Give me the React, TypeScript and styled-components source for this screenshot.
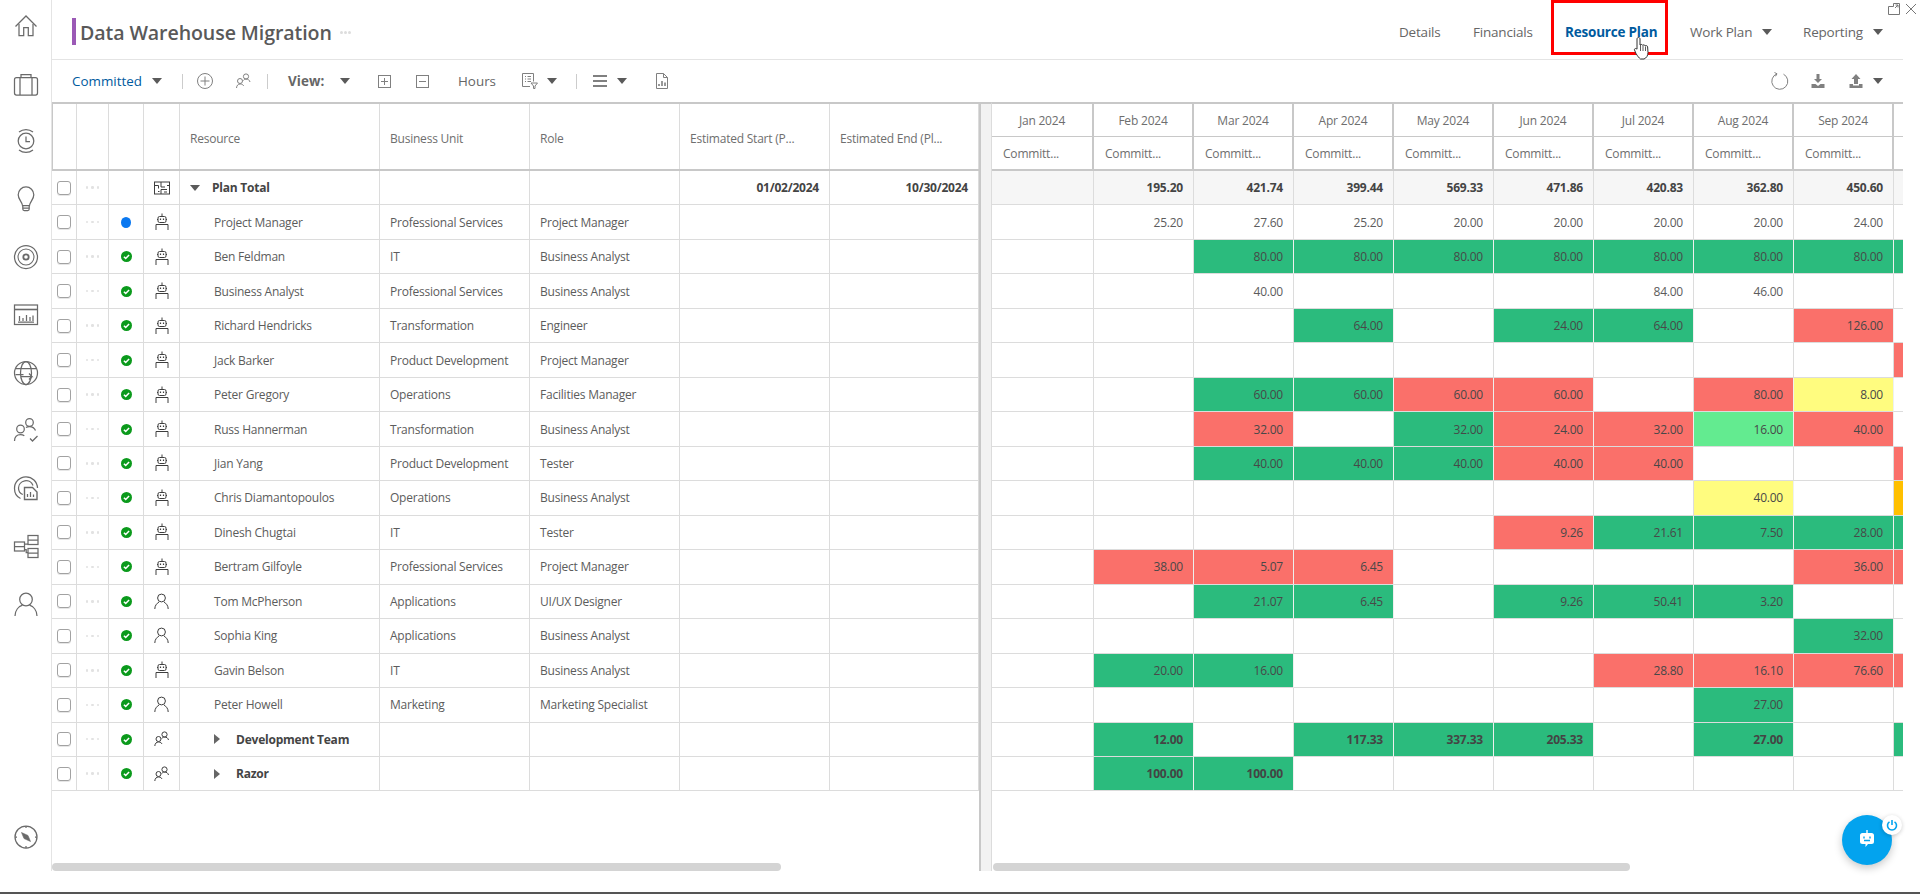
import * as React from 'react';
import styled, { createGlobalStyle } from 'styled-components';

const GlobalStyle = createGlobalStyle`
    html, body {
        margin: 0;
        padding: 0;
        background: #fff;
    }
    body {
        font-family: 'Open Sans', 'Noto Sans', sans-serif;
        color: #555;
    }
`;

const COLORS = {
    line: '#dcdcdc',
    heavy: '#c8c8c8',
    text: '#5c5c5c',
    dark: '#444',
    icon: '#6a6a6a',
    blue: '#005a9e',
};

const TONES: Record<string, string> = {
    g: '#2bbb7d',
    r: '#fa706a',
    y: '#fffc7f',
    l: '#63eb90',
    o: '#ffc000',
};

const Page = styled.div`
    position: relative;
    display: flex;
    width: 1920px;
    height: 894px;
    overflow: hidden;
    box-sizing: border-box;
    border-bottom: 2px solid #555;
`;

const Sidebar = styled.nav`
    flex: none;
    display: flex;
    flex-direction: column;
    align-items: center;
    box-sizing: border-box;
    width: 52px;
    height: 871px;
    border-right: 1px solid #e4e4e4;
`;

const NavItem = styled.div`
    flex: none;
    display: flex;
    align-items: center;
    justify-content: center;
    width: 100%;
    height: 57.8px;

    &:first-child {
        margin-top: -3px;
    }
`;

const NavBottom = styled(NavItem)`
    margin-top: auto;
    margin-bottom: 5px;
`;

const NavGlyph = styled.svg.attrs({ viewBox: '0 0 26 26' })`
    width: 26px;
    height: 26px;
    fill: none;
    stroke: ${COLORS.icon};
    stroke-width: 1.25;
`;

const Main = styled.main`
    flex: none;
    display: flex;
    flex-direction: column;
    width: 1851px;
`;

const TitleBar = styled.header`
    flex: none;
    display: flex;
    align-items: center;
    box-sizing: border-box;
    height: 60px;
    padding: 5px 20px 0;
    border-bottom: 1px solid #e4e4e4;
`;

const TitleMark = styled.div`
    width: 4px;
    height: 27px;
    margin-top: -1px;
    background: #9b59b6;
`;

const Title = styled.h1`
    margin: 0 0 0 4px;
    font-size: 19.6px;
    font-weight: 600;
    letter-spacing: -0.1px;
    color: #595959;
`;

const TitleDots = styled.div`
    display: flex;
    gap: 1px;
    margin: 0 0 0 8px;
    span {
        width: 3px;
        height: 3px;
        border-radius: 50%;
        background: #ddd;
    }
`;

const Tabs = styled.div`
    display: flex;
    align-items: center;
    margin-left: auto;
`;

const Tab = styled.div<{ $w: number; $ml?: number; $active?: boolean }>`
    position: relative;
    flex: none;
    width: ${({ $w }) => $w}px;
    margin-left: ${({ $ml }) => $ml ?? 33}px;
    font-size: 13.5px;
    letter-spacing: -0.2px;
    white-space: nowrap;
    font-weight: ${({ $active }) => ($active ? 700 : 400)};
    color: ${({ $active }) => ($active ? COLORS.blue : '#666')};
`;

const RedBox = styled.div`
    position: absolute;
    left: -14px;
    top: -23px;
    box-sizing: border-box;
    width: 117px;
    height: 55px;
    border: 3px solid #f00;
`;

const HandCursor = styled.svg.attrs({ viewBox: '0 0 18 24' })`
    position: absolute;
    left: 68px;
    top: 13px;
    width: 18px;
    height: 24px;
`;

const TabCaret = styled.div<{ $ml: number }>`
    flex: none;
    margin-left: ${({ $ml }) => $ml}px;
`;

const WindowControls = styled.div`
    position: absolute;
    top: 3px;
    right: 3px;
    display: flex;
    gap: 5px;
`;

const WindowGlyph = styled.svg.attrs({ viewBox: '0 0 12 12' })`
    width: 12px;
    height: 12px;
    fill: none;
    stroke: #777;
    stroke-width: 1;
`;

const Toolbar = styled.div`
    flex: none;
    display: flex;
    align-items: center;
    box-sizing: border-box;
    height: 42px;
    padding: 0 20px;
`;

const ToolSlot = styled.div<{ $ml?: number; $w?: number }>`
    flex: none;
    display: flex;
    align-items: center;
    margin-left: ${({ $ml }) => $ml ?? 0}px;
    width: ${({ $w }) => ($w ? `${$w}px` : 'auto')};
`;

const ToolRight = styled.div`
    display: flex;
    align-items: center;
    margin-left: auto;
`;

const ToolText = styled.span<{ $tone?: 'blue' | 'bold' }>`
    font-size: 13.4px;
    white-space: nowrap;
    font-weight: ${({ $tone }) => ($tone === 'bold' ? 700 : 400)};
    letter-spacing: ${({ $tone }) => ($tone === 'bold' ? '0.1px' : '0')};
    color: ${({ $tone }) => ($tone === 'blue' ? COLORS.blue : '#666')};
`;

const Caret = styled.span`
    display: block;
    width: 0;
    height: 0;
    border-left: 5px solid transparent;
    border-right: 5px solid transparent;
    border-top: 6px solid #5a5a5a;
`;

const SideCaret = styled.span`
    display: block;
    width: 0;
    height: 0;
    border-top: 5px solid transparent;
    border-bottom: 5px solid transparent;
    border-left: 6px solid #666;
`;

const ToolDivider = styled.div`
    width: 1px;
    height: 15px;
    background: #ccc;
`;

const ToolGlyph = styled.svg<{ $w?: number; $size?: number; $solid?: boolean; $heavy?: boolean }>`
    display: block;
    width: ${({ $w, $size }) => $w ?? $size ?? 16}px;
    height: ${({ $size }) => $size ?? 16}px;
    fill: ${({ $solid }) => ($solid ? '#808080' : 'none')};
    stroke: ${({ $solid }) => ($solid ? 'none' : '#808080')};
    stroke-width: ${({ $heavy }) => ($heavy ? 2 : 1)};
`;

const Panes = styled.div`
    flex: none;
    display: flex;
    height: 769px;
`;

const LeftPane = styled.section`
    flex: none;
    display: flex;
    flex-direction: column;
    width: 927px;
    height: 100%;
`;

const Splitter = styled.div`
    flex: none;
    box-sizing: border-box;
    width: 13px;
    height: 100%;
    background: #f2f2f2;
    border-left: 2px solid ${COLORS.heavy};
    border-right: 1px solid ${COLORS.line};
    border-top: 2px solid ${COLORS.heavy};
`;

const RightPane = styled.section`
    flex: none;
    display: flex;
    flex-direction: column;
    width: 911px;
    height: 100%;
    overflow: hidden;
`;

const LEFT_COLS = '25px 32px 35px 36px 200px 150px 150px 150px 149px';
const RIGHT_COLS = '102px repeat(9, 100px)';

const LeftHead = styled.div`
    flex: none;
    display: grid;
    grid-template-columns: ${LEFT_COLS};
    box-sizing: border-box;
    height: 69px;
    border-top: 2px solid ${COLORS.heavy};
    border-bottom: 2px solid ${COLORS.heavy};
`;

const HeadCell = styled.div<{ $first?: boolean }>`
    display: flex;
    align-items: center;
    box-sizing: border-box;
    padding: 3px 10px 0;
    font-size: 12px;
    letter-spacing: -0.22px;
    color: #6e6e6e;
    white-space: nowrap;
    border-right: 1px solid ${COLORS.line};
    border-left: ${({ $first }) => ($first ? `1px solid ${COLORS.heavy}` : 'none')};
`;

const RightHead = styled.div`
    flex: none;
    display: grid;
    grid-template-columns: ${RIGHT_COLS};
    grid-template-rows: 33px 32px;
    box-sizing: border-box;
    height: 69px;
    width: 1002px;
    border-top: 2px solid ${COLORS.heavy};
    border-bottom: 2px solid ${COLORS.heavy};
`;

const MonthCell = styled.div<{ $sub?: boolean }>`
    display: flex;
    align-items: center;
    justify-content: ${({ $sub }) => ($sub ? 'flex-start' : 'center')};
    box-sizing: border-box;
    padding-left: ${({ $sub }) => ($sub ? 11 : 0)}px;
    padding-top: ${({ $sub }) => ($sub ? 0 : 1)}px;
    font-size: 12px;
    letter-spacing: -0.2px;
    color: #6e6e6e;
    white-space: nowrap;
    border-right: 2px solid ${COLORS.heavy};
    border-bottom: ${({ $sub }) => ($sub ? 'none' : `1px solid ${COLORS.heavy}`)};
`;

const Row = styled.div`
    flex: none;
    display: grid;
    grid-template-columns: ${LEFT_COLS};
    height: 34.47px;
`;

const MonthRow = styled.div`
    flex: none;
    display: grid;
    grid-template-columns: ${RIGHT_COLS};
    width: 1002px;
    height: 34.47px;
`;

const Cell = styled.div<{ $bold?: boolean; $align?: 'center' | 'right'; $indent?: boolean }>`
    display: flex;
    align-items: center;
    justify-content: ${({ $align }) =>
        $align === 'center' ? 'center' : $align === 'right' ? 'flex-end' : 'flex-start'};
    box-sizing: border-box;
    min-width: 0;
    padding: ${({ $align }) => ($align === 'center' ? '0' : '0 10px')};
    padding-left: ${({ $indent }) => ($indent ? '34px' : undefined)};
    font-size: 12px;
    letter-spacing: -0.22px;
    font-weight: ${({ $bold }) => ($bold ? 700 : 400)};
    color: ${({ $bold }) => ($bold ? COLORS.dark : COLORS.text)};
    white-space: nowrap;
    border-right: 1px solid ${COLORS.line};
    border-bottom: 1px solid ${COLORS.line};
`;

const ValueCell = styled.div<{ $tone?: string; $bold?: boolean; $total?: boolean }>`
    display: flex;
    align-items: center;
    justify-content: flex-end;
    box-sizing: border-box;
    padding-right: 10px;
    font-size: 12px;
    letter-spacing: -0.22px;
    font-weight: ${({ $bold }) => ($bold ? 700 : 400)};
    color: ${({ $bold, $tone }) => ($bold ? COLORS.dark : $tone ? '#484848' : COLORS.text)};
    background-color: ${({ $tone, $total }) => ($tone ? TONES[$tone] : $total ? '#f6f6f6' : '#fff')};
    background-clip: padding-box;
    border-right: 1px solid ${({ $tone }) => ($tone ? '#eef0ee' : COLORS.line)};
    border-bottom: 1px solid ${COLORS.line};
`;

const Checkbox = styled.span`
    display: block;
    box-sizing: border-box;
    width: 14px;
    height: 14px;
    border: 1px solid #a2a2a2;
    border-radius: 3px;
    box-shadow: 0 1px 0 #e6e6e6;
`;

const RowDots = styled.span`
    display: flex;
    gap: 3px;
    i {
        display: block;
        width: 2.5px;
        height: 2.5px;
        border-radius: 50%;
        background: #e2e2e2;
    }
`;

const BlueDot = styled.span`
    display: block;
    width: 10px;
    height: 11px;
    border-radius: 50%;
    background: #0a78f0;
`;

const TreeToggle = styled.span`
    display: inline-flex;
    flex: none;
    width: 22px;
`;

const Thumb = styled.div<{ $w: number; $ml?: number }>`
    flex: none;
    width: ${({ $w }) => $w}px;
    height: 8px;
    margin-top: auto;
    margin-left: ${({ $ml }) => $ml ?? 0}px;
    border-radius: 4px;
    background: #d4d4d4;
`;

const Fab = styled.div`
    position: absolute;
    left: 1842px;
    top: 815px;
    display: flex;
    align-items: center;
    justify-content: center;
    width: 50px;
    height: 50px;
    border-radius: 50%;
    background: #03a3ee;
    box-shadow: 0 3px 8px rgba(0, 0, 0, 0.22);
`;

const FabBadge = styled.div`
    position: absolute;
    top: 0;
    right: -10px;
    display: flex;
    align-items: center;
    justify-content: center;
    width: 20px;
    height: 20px;
    border-radius: 50%;
    background: #fff;
    box-shadow: 0 1px 4px rgba(0, 0, 0, 0.2);
`;

const SmallGlyph = styled.svg`
    display: block;
    fill: none;
    stroke: #3e3e3e;
    stroke-width: 1;
`;

/* sidebar drawings */
const navIcons: React.ReactNode[] = [
    <>
        <path d="M2.5 13.5 13 3l10.5 10.5" />
        <path d="M6 11v11.5h4.700v-8h4.600v8H20V11" />
    </>,
    <>
        <rect x="1.5" y="6.5" width="23" height="17.5" rx="2" />
        <path d="M8 6.5V3.500h10v3M7 6.5V24M19 6.5V24" />
    </>,
    <>
        <circle cx="13" cy="13" r="7.8" />
        <path d="M13 8.5v5h4M6 4a11.500 11.500 0 0 1 14 0M6 22a11.500 11.500 0 0 0 14 0" />
    </>,
    <>
        <path d="M9.500 19.500C9 15.500 5.200 13.500 5.200 8.700a7.800 7.800 0 0 1 15.600 0c0 4.800-3.800 6.800-4.300 10.800z" />
        <path d="M9.800 19.500v3.500c0 1 .7 1.500 1.500 1.500h3.400c.8 0 1.500-.5 1.500-1.500v-3.500M10 22h6" />
    </>,
    <>
        <circle cx="13" cy="13" r="11.5" />
        <circle cx="13" cy="13" r="8" strokeWidth="1.1" />
        <circle cx="13" cy="13" r="2.7" strokeWidth="1.8" />
    </>,
    <>
        <rect x="1.5" y="3" width="23" height="19.5" />
        <path d="M1.5 7.5h23" strokeWidth="1.6" />
        <path d="M5 20h16M6.500 19v-5M10 19v-3M13.500 19v-6M17 19v-4M20 19v-5.500" />
    </>,
    <>
        <circle cx="13" cy="13" r="11.5" />
        <ellipse cx="13" cy="13" rx="5.5" ry="11.5" />
        <path d="M2.500 8.500h21M2.500 14.500h8" />
        <path d="M8 16.500h11l-3-3M19 16.500l-3 3" />
    </>,
    <>
        <circle cx="16.5" cy="5.5" r="3.8" />
        <circle cx="7.5" cy="12" r="3.8" />
        <path d="M1.500 24c0-4 2.500-6.500 6-6.500 1.500 0 2.800.5 3.800 1.300M13 10.500c1-.7 2.200-1 3.500-1 2.800 0 5 1.500 6 4" />
        <path d="M17 21.500l2.500 2.500 5-5" />
    </>,
    <>
        <path d="M7.500 23.500C3.800 21.800 1.500 18 1.500 13.500a11.500 11.500 0 0 1 23-.5" />
        <path d="M9.800 19.500C7.200 18.500 5.500 16 5.500 13a7.500 7.500 0 0 1 14.500-2.500" />
        <path d="M11.500 12.500h8l4.500 4.500v7.500H11.500z" strokeWidth="1.4" />
        <path d="M14.500 22v-3M17.500 22v-5M20.500 22v-2.500" />
    </>,
    <>
        <rect x="1.5" y="9" width="10" height="9" />
        <rect x="15" y="2.5" width="10" height="9" />
        <rect x="15" y="15.5" width="10" height="9" />
        <path d="M1.500 13.500h10M15 7h10M15 20h10M11.500 11H15M11.500 16.500h1.700v3H15" />
    </>,
    <>
        <circle cx="13" cy="8.5" r="6.3" />
        <path d="M2 25c0-5.500 3.500-9.500 7.500-10.800M24 25c0-5.500-3.500-9.500-7.500-10.800" />
    </>,
];

const RobotGlyph = () => (
    <SmallGlyph width="14" height="18" viewBox="0 0 14 18">
        <path d="M7 .5v3" />
        <rect x="3" y="3.5" width="8" height="6" rx="1.5" />
        <path d="M5.500 5.500v1.500M8.500 5.500v1.500M2 6.500h1M11 6.500h1" strokeWidth="1.2" />
        <path d="M1 17v-5.500h12V17" />
    </SmallGlyph>
);

const PersonGlyph = () => (
    <SmallGlyph width="15" height="17" viewBox="0 0 15 17">
        <circle cx="7.5" cy="5" r="3.9" />
        <path d="M.8 16c0-3.500 2-5.500 4.200-7M14.200 16c0-3.500-2-5.500-4.200-7" />
    </SmallGlyph>
);

const GroupGlyph = () => (
    <SmallGlyph width="15" height="16" viewBox="0 0 15 16">
        <circle cx="10.5" cy="3.5" r="2.6" />
        <circle cx="4.5" cy="8" r="2.5" />
        <path d="M.8 15c.2-2.500 1.500-4 3.700-4s3 1 3.500 2M7.800 7.500c.6-1 1.500-1.500 2.700-1.500 2 0 3.500 1 4 3" />
    </SmallGlyph>
);

const PlanGlyph = () => (
    <SmallGlyph width="16" height="14" viewBox="0 0 16 14">
        <rect x=".5" y="1" width="15" height="12" />
        <path d="M.5 4.500h4v3M7 1v5h4M7 13v-4.500h6M13 4.500h2.500M4 10.500h1.500M10 11h3" />
    </SmallGlyph>
);

const StatusCheck = () => (
    <svg width="11" height="11" viewBox="0 0 11 11">
        <circle cx="5.5" cy="5.5" r="5.5" fill="#0b9a1c" />
        <path d="M2.900 5.700l1.800 1.700 3.400-3.500" fill="none" stroke="#fff" strokeWidth="1.5" />
    </svg>
);

type Tone = { tone: string; value: string };
const g = (value = ''): Tone => ({ tone: 'g', value });
const r = (value = ''): Tone => ({ tone: 'r', value });
const y = (value = ''): Tone => ({ tone: 'y', value });
const l = (value = ''): Tone => ({ tone: 'l', value });
const o = (value = ''): Tone => ({ tone: 'o', value });
const v = (value: string): Tone => ({ tone: '', value });

type ResourceRow = {
    name: string;
    unit?: string;
    role?: string;
    kind: 'robot' | 'person' | 'group';
    status?: 'dot' | 'check';
    group?: boolean;
    cells: Record<number, Tone>;
};

// the tenth column is cut by the pane edge, so it has colour but no readable label
const months = ['Jan', 'Feb', 'Mar', 'Apr', 'May', 'Jun', 'Jul', 'Aug', 'Sep', ''];
const totals = ['', '195.20', '421.74', '399.44', '569.33', '471.86', '420.83', '362.80', '450.60', ''];

const rows: ResourceRow[] = [
    {
        name: 'Project Manager',
        unit: 'Professional Services',
        role: 'Project Manager',
        kind: 'robot',
        status: 'dot',
        cells: {
            1: v('25.20'),
            2: v('27.60'),
            3: v('25.20'),
            4: v('20.00'),
            5: v('20.00'),
            6: v('20.00'),
            7: v('20.00'),
            8: v('24.00'),
        },
    },
    {
        name: 'Ben Feldman',
        unit: 'IT',
        role: 'Business Analyst',
        kind: 'robot',
        cells: {
            2: g('80.00'),
            3: g('80.00'),
            4: g('80.00'),
            5: g('80.00'),
            6: g('80.00'),
            7: g('80.00'),
            8: g('80.00'),
            9: g(),
        },
    },
    {
        name: 'Business Analyst',
        unit: 'Professional Services',
        role: 'Business Analyst',
        kind: 'robot',
        cells: { 2: v('40.00'), 6: v('84.00'), 7: v('46.00') },
    },
    {
        name: 'Richard Hendricks',
        unit: 'Transformation',
        role: 'Engineer',
        kind: 'robot',
        cells: { 3: g('64.00'), 5: g('24.00'), 6: g('64.00'), 8: r('126.00') },
    },
    { name: 'Jack Barker', unit: 'Product Development', role: 'Project Manager', kind: 'robot', cells: { 9: r() } },
    {
        name: 'Peter Gregory',
        unit: 'Operations',
        role: 'Facilities Manager',
        kind: 'robot',
        cells: { 2: g('60.00'), 3: g('60.00'), 4: r('60.00'), 5: r('60.00'), 7: r('80.00'), 8: y('8.00') },
    },
    {
        name: 'Russ Hannerman',
        unit: 'Transformation',
        role: 'Business Analyst',
        kind: 'robot',
        cells: { 2: r('32.00'), 4: g('32.00'), 5: r('24.00'), 6: r('32.00'), 7: l('16.00'), 8: r('40.00') },
    },
    {
        name: 'Jian Yang',
        unit: 'Product Development',
        role: 'Tester',
        kind: 'robot',
        cells: { 2: g('40.00'), 3: g('40.00'), 4: g('40.00'), 5: r('40.00'), 6: r('40.00'), 9: r() },
    },
    {
        name: 'Chris Diamantopoulos',
        unit: 'Operations',
        role: 'Business Analyst',
        kind: 'robot',
        cells: { 7: y('40.00'), 9: o() },
    },
    {
        name: 'Dinesh Chugtai',
        unit: 'IT',
        role: 'Tester',
        kind: 'robot',
        cells: { 5: r('9.26'), 6: g('21.61'), 7: g('7.50'), 8: g('28.00'), 9: g() },
    },
    {
        name: 'Bertram Gilfoyle',
        unit: 'Professional Services',
        role: 'Project Manager',
        kind: 'robot',
        cells: { 1: r('38.00'), 2: r('5.07'), 3: r('6.45'), 8: r('36.00'), 9: r() },
    },
    {
        name: 'Tom McPherson',
        unit: 'Applications',
        role: 'UI/UX Designer',
        kind: 'person',
        cells: { 2: g('21.07'), 3: g('6.45'), 5: g('9.26'), 6: g('50.41'), 7: g('3.20') },
    },
    { name: 'Sophia King', unit: 'Applications', role: 'Business Analyst', kind: 'person', cells: { 8: g('32.00') } },
    {
        name: 'Gavin Belson',
        unit: 'IT',
        role: 'Business Analyst',
        kind: 'robot',
        cells: { 1: g('20.00'), 2: g('16.00'), 6: r('28.80'), 7: r('16.10'), 8: r('76.60'), 9: r() },
    },
    { name: 'Peter Howell', unit: 'Marketing', role: 'Marketing Specialist', kind: 'person', cells: { 7: g('27.00') } },
    {
        name: 'Development Team',
        kind: 'group',
        group: true,
        cells: { 1: g('12.00'), 3: g('117.33'), 4: g('337.33'), 5: g('205.33'), 7: g('27.00'), 9: g() },
    },
    { name: 'Razor', kind: 'group', group: true, cells: { 1: g('100.00'), 2: g('100.00') } },
];

const kindIcon = (kind: ResourceRow['kind']) => {
    if (kind === 'person') return <PersonGlyph />;
    if (kind === 'group') return <GroupGlyph />;
    return <RobotGlyph />;
};

const App = (): React.JSX.Element => (
    <Page>
        <GlobalStyle />
        <Sidebar>
            {navIcons.map((icon, i) => (
                <NavItem key={i}>
                    <NavGlyph>{icon}</NavGlyph>
                </NavItem>
            ))}
            <NavBottom>
                <NavGlyph>
                    <circle cx="13" cy="13" r="11" />
                    <path d="M13 2v2M13 22v2M2 13h2M22 13h2" />
                    <path d="M8.500 8.500l6.500 3 2.500 6-6.500-3z" fill="#6a6a6a" strokeWidth="0.6" />
                </NavGlyph>
            </NavBottom>
        </Sidebar>

        <Main>
            <TitleBar>
                <TitleMark />
                <Title>Data Warehouse Migration</Title>
                <TitleDots>
                    <span />
                    <span />
                    <span />
                </TitleDots>
                <Tabs>
                    <Tab $w={41}>Details</Tab>
                    <Tab $w={59}>Financials</Tab>
                    <Tab $w={92} $active>
                        Resource Plan
                        <RedBox />
                        <HandCursor>
                            <path
                                d="M5.500 1.500c1 0 1.500.7 1.500 1.500v6c.5-.8 2.200-.8 2.600.2.700-.6 2.200-.4 2.500.6.800-.5 2.400-.2 2.500 1l.4 5.700c0 3-1.500 5.500-4 6.500H7.500c-1.500-1-3-3-4.500-5.500L1.500 14c-.5-1.500 1.500-2 2.500-.8V3c0-.8.500-1.500 1.500-1.500z"
                                fill="#fff"
                                stroke="#333"
                                strokeWidth="1"
                            />
                            <path d="M7.500 9v6M10 9.500V15M12.500 10.500V15" stroke="#333" strokeWidth="0.8" fill="none" />
                        </HandCursor>
                    </Tab>
                    <Tab $w={62}>Work Plan</Tab>
                    <TabCaret $ml={10}>
                        <Caret />
                    </TabCaret>
                    <Tab $w={60} $ml={31}>
                        Reporting
                    </Tab>
                    <TabCaret $ml={10}>
                        <Caret />
                    </TabCaret>
                </Tabs>
            </TitleBar>

            <Toolbar>
                <ToolSlot $w={74}>
                    <ToolText $tone="blue">Committed</ToolText>
                </ToolSlot>
                <ToolSlot $ml={6}>
                    <Caret />
                </ToolSlot>
                <ToolSlot $ml={20}>
                    <ToolDivider />
                </ToolSlot>
                <ToolSlot $ml={14}>
                    <ToolGlyph viewBox="0 0 16 16">
                        <circle cx="8" cy="8" r="7.5" />
                        <path d="M8 3.500v9M3.500 8h9" />
                    </ToolGlyph>
                </ToolSlot>
                <ToolSlot $ml={22}>
                    <ToolGlyph viewBox="0 0 16 16">
                        <circle cx="11" cy="3.5" r="2.6" />
                        <circle cx="5" cy="8" r="2.5" />
                        <path d="M1.500 15c.2-2.500 1.500-4 3.700-4s3 1 3.500 2M8.500 7.500c.6-1 1.300-1.500 2.500-1.500 2 0 3.500 1 4 3" />
                    </ToolGlyph>
                </ToolSlot>
                <ToolSlot $ml={16}>
                    <ToolDivider />
                </ToolSlot>
                <ToolSlot $ml={20} $w={36}>
                    <ToolText $tone="bold">View:</ToolText>
                </ToolSlot>
                <ToolSlot $ml={16}>
                    <Caret />
                </ToolSlot>
                <ToolSlot $ml={28}>
                    <ToolGlyph $size={13} viewBox="0 0 13 13">
                        <rect x=".5" y=".5" width="12" height="12" />
                        <path d="M6.500 3v7M3 6.500h7" />
                    </ToolGlyph>
                </ToolSlot>
                <ToolSlot $ml={25}>
                    <ToolGlyph $size={13} viewBox="0 0 13 13">
                        <rect x=".5" y=".5" width="12" height="12" />
                        <path d="M3 6.500h7" />
                    </ToolGlyph>
                </ToolSlot>
                <ToolSlot $ml={29} $w={38}>
                    <ToolText>Hours</ToolText>
                </ToolSlot>
                <ToolSlot $ml={26}>
                    <ToolGlyph viewBox="0 0 16 16">
                        <path d="M8 13.500H.5V.5h11v8" />
                        <path d="M3 3.500h1M5.500 3.500H9M3 6h1M5.500 6H9M3 8.500h1M5.500 8.500H9" />
                        <path d="M9 10h6.500l-2.500 3v2.500h-1.500V13z" />
                    </ToolGlyph>
                </ToolSlot>
                <ToolSlot $ml={9}>
                    <Caret />
                </ToolSlot>
                <ToolSlot $ml={19}>
                    <ToolDivider />
                </ToolSlot>
                <ToolSlot $ml={16}>
                    <ToolGlyph $size={14} $heavy viewBox="0 0 14 14">
                        <path d="M0 2h14M0 7h14M0 12h14" />
                    </ToolGlyph>
                </ToolSlot>
                <ToolSlot $ml={10}>
                    <Caret />
                </ToolSlot>
                <ToolSlot $ml={29}>
                    <ToolGlyph $w={12} viewBox="0 0 12 16">
                        <path d="M.5.5h7l4 4v11H.5z" />
                        <path d="M7.500.5v4h4" />
                        <path d="M3 13v-2M6 13V8M9 13V9.500" strokeWidth="1.6" />
                    </ToolGlyph>
                </ToolSlot>
                <ToolRight>
                    <ToolGlyph $size={18} viewBox="0 0 18 18">
                        <path d="M6 1.800A8 8 0 1 0 12.500 2.200" />
                        <path d="M3.500 .5l2.500 1.300-1.500 2.500" />
                    </ToolGlyph>
                    <ToolSlot $ml={21}>
                        <ToolGlyph $solid viewBox="0 0 16 16">
                            <path d="M6.500 1h3v5H12L8 10 4 6h2.500zM1.500 11h4l2.500 2 2.500-2h4v4h-13z" />
                        </ToolGlyph>
                    </ToolSlot>
                    <ToolSlot $ml={22}>
                        <ToolGlyph $solid viewBox="0 0 16 16">
                            <path d="M8 1l4.500 5H10v5H6V6H3.500zM1.500 11H5v1.500h6V11h3.500v4h-13z" />
                        </ToolGlyph>
                    </ToolSlot>
                    <ToolSlot $ml={9}>
                        <Caret />
                    </ToolSlot>
                </ToolRight>
            </Toolbar>

            <Panes>
                <LeftPane>
                    <LeftHead>
                        <HeadCell $first />
                        <HeadCell />
                        <HeadCell />
                        <HeadCell />
                        <HeadCell>Resource</HeadCell>
                        <HeadCell>Business Unit</HeadCell>
                        <HeadCell>Role</HeadCell>
                        <HeadCell>Estimated Start (P...</HeadCell>
                        <HeadCell>Estimated End (Pl...</HeadCell>
                    </LeftHead>

                    <Row>
                        <Cell $align="center">
                            <Checkbox />
                        </Cell>
                        <Cell $align="center">
                            <RowDots>
                                <i />
                                <i />
                                <i />
                            </RowDots>
                        </Cell>
                        <Cell $align="center" />
                        <Cell $align="center">
                            <PlanGlyph />
                        </Cell>
                        <Cell $bold>
                            <TreeToggle>
                                <Caret />
                            </TreeToggle>
                            Plan Total
                        </Cell>
                        <Cell />
                        <Cell />
                        <Cell $bold $align="right">
                            01/02/2024
                        </Cell>
                        <Cell $bold $align="right">
                            10/30/2024
                        </Cell>
                    </Row>

                    {rows.map((row) => (
                        <Row key={row.name}>
                            <Cell $align="center">
                                <Checkbox />
                            </Cell>
                            <Cell $align="center">
                                <RowDots>
                                    <i />
                                    <i />
                                    <i />
                                </RowDots>
                            </Cell>
                            <Cell $align="center">{row.status === 'dot' ? <BlueDot /> : <StatusCheck />}</Cell>
                            <Cell $align="center">{kindIcon(row.kind)}</Cell>
                            <Cell $bold={row.group} $indent>
                                {row.group && (
                                    <TreeToggle>
                                        <SideCaret />
                                    </TreeToggle>
                                )}
                                {row.name}
                            </Cell>
                            <Cell>{row.unit}</Cell>
                            <Cell>{row.role}</Cell>
                            <Cell />
                            <Cell />
                        </Row>
                    ))}
                    <Thumb $w={729} />
                </LeftPane>

                <Splitter />

                <RightPane>
                    <RightHead>
                        {months.map((m, i) => (
                            <MonthCell key={i}>{m && `${m} 2024`}</MonthCell>
                        ))}
                        {months.map((m, i) => (
                            <MonthCell key={i} $sub>
                                {m && 'Committ...'}
                            </MonthCell>
                        ))}
                    </RightHead>

                    <MonthRow>
                        {totals.map((t, i) => (
                            <ValueCell key={i} $bold $total>
                                {t}
                            </ValueCell>
                        ))}
                    </MonthRow>

                    {rows.map((row) => (
                        <MonthRow key={row.name}>
                            {months.map((_, i) => (
                                <ValueCell key={i} $tone={row.cells[i]?.tone} $bold={row.group}>
                                    {row.cells[i]?.value}
                                </ValueCell>
                            ))}
                        </MonthRow>
                    ))}
                    <Thumb $w={637} $ml={1} />
                </RightPane>
            </Panes>
        </Main>

        <WindowControls>
            <WindowGlyph>
                <path d="M.5 3.500h5v-3h6v11h-11zM7 5l3-3M7.500 2H10v2.500" />
            </WindowGlyph>
            <WindowGlyph>
                <path d="M1 1l10 10M11 1L1 11" />
            </WindowGlyph>
        </WindowControls>

        <Fab>
            <svg width="16" height="20" viewBox="0 0 16 20">
                <path d="M8 0v3" stroke="#fff" strokeWidth="1.4" />
                <path
                    d="M3.500 3h9a2.500 2.500 0 0 1 2.500 2.500v6a2.500 2.500 0 0 1-2.500 2.500H9l-2.500 3v-3h-3A2.500 2.500 0 0 1 1 11.500v-6A2.500 2.500 0 0 1 3.500 3z"
                    fill="#fff"
                />
                <path d="M5 6.500v2M11 6.500v2M5 10.500h6" stroke="#03a3ee" strokeWidth="1.4" fill="none" />
            </svg>
            <FabBadge>
                <svg width="12" height="12" viewBox="0 0 12 12" fill="none" stroke="#03a3ee" strokeWidth="1.6">
                    <path d="M6 1v5" />
                    <path d="M3.500 2.800a4.500 4.500 0 1 0 5 0" />
                </svg>
            </FabBadge>
        </Fab>
    </Page>
);

export default App;
